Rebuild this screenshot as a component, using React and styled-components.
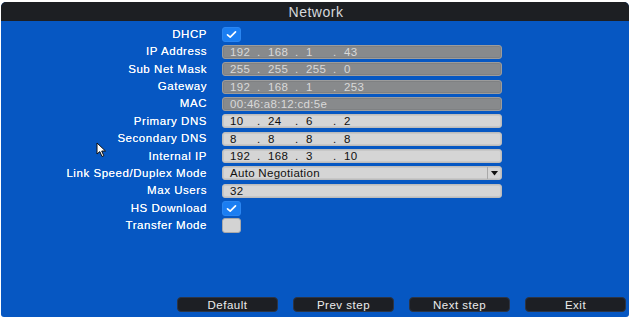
import React from "react";
import styled, { createGlobalStyle } from "styled-components";

const GlobalStyle = createGlobalStyle`
  html, body { margin: 0; padding: 0; background: #ffffff; }
  body { font-family: "Liberation Sans", Arial, sans-serif; }
`;

const Window = styled.div`
  position: relative;
  margin: 2px 2px 0 1px;
  height: 315px;
  display: flex;
  flex-direction: column;
  border-radius: 5px 5px 3px 3px;
  overflow: hidden;
  background: #0657c2;
`;

const TitleBar = styled.div`
  height: 19px;
  background: #1d1f23;
  color: #d6d8dc;
  font-size: 14px;
  letter-spacing: 0.5px;
  display: flex;
  align-items: center;
  justify-content: center;
  padding-left: 2px;
`;

const Body = styled.div`
  flex: 1;
  display: flex;
  flex-direction: column;
  padding: 6px 3px 5px 0;
`;

const Form = styled.div`
  display: grid;
  grid-template-columns: 206px 280px;
  column-gap: 15px;
  grid-auto-rows: 15px;
  row-gap: 2.36px;
`;

const Label = styled.div`
  color: #ffffff;
  font-size: 11.5px;
  letter-spacing: 0.55px;
  text-align: right;
  align-self: center;
  line-height: 15px;
  white-space: nowrap;
  text-shadow: 0 0 0.6px rgba(255, 255, 255, 0.8);
`;

const Field = styled.div`
  height: 14px;
  box-sizing: border-box;
  align-self: center;
  border-radius: 3px;
  display: flex;
  align-items: center;
  padding-left: 7px;
  font-size: 11.5px;
  letter-spacing: 0.3px;
  white-space: nowrap;
  background: ${(p) => (p.$disabled ? "#888a8c" : "#d5d5d5")};
  color: ${(p) => (p.$disabled ? "#d9d9d9" : "#101010")};
  border: 1px solid ${(p) => (p.$disabled ? "#9c9c9c" : "#bcbcbc")};
  box-shadow: inset 0 0 0 1px ${(p) => (p.$disabled ? "#7f8183" : "#c7c7c7")};
`;

const Segment = styled.span`
  width: 38px;
  display: inline-flex;
  flex: none;
`;

const Num = styled.span`
  width: 27px;
  flex: none;
`;

const SelectField = styled(Field)`
  padding-right: 0;
  justify-content: space-between;
`;

const SelectArrow = styled.span`
  width: 13px;
  height: 100%;
  border-left: 1px solid #a9a9a9;
  display: flex;
  align-items: center;
  justify-content: center;
`;

const Check = styled.div`
  width: 19px;
  height: 15px;
  box-sizing: border-box;
  align-self: center;
  border-radius: 3px;
  display: flex;
  align-items: center;
  justify-content: center;
  background: ${(p) => (p.$checked ? "#1b7ef2" : "#d3d3d3")};
  border: 1px solid ${(p) => (p.$checked ? "#2a86f2" : "#a9a9a9")};
`;

const ButtonBar = styled.div`
  margin-top: auto;
  display: flex;
  justify-content: flex-end;
  gap: 15px;
`;

const Button = styled.div`
  width: 101px;
  height: 15px;
  box-sizing: border-box;
  border-radius: 4px;
  background: #1d1f24;
  border: 1px solid #2c3444;
  color: #ececec;
  font-size: 11.5px;
  letter-spacing: 0.5px;
  display: flex;
  align-items: center;
  justify-content: center;
`;

const Cursor = styled.svg`
  position: absolute;
  left: 95px;
  top: 140px;
`;

const IpValue = ({ parts }) => (
  <>
    {parts.map((p, i) => (
      <Segment key={i}>
        <Num>{p}</Num>
        {i < parts.length - 1 ? "." : null}
      </Segment>
    ))}
  </>
);

const CheckMark = () => (
  <svg width="11" height="9" viewBox="0 0 11 9">
    <path d="M1.5 4.8 L4.2 7.2 L9.5 1.8" fill="none" stroke="#ffffff" strokeWidth="1.7" strokeLinecap="round" strokeLinejoin="round" />
  </svg>
);

export default function App() {
  return (
    <>
      <GlobalStyle />
      <Window>
        <TitleBar>Network</TitleBar>
        <Body>
          <Form>
            <Label>DHCP</Label>
            <Check $checked><CheckMark /></Check>

            <Label>IP Address</Label>
            <Field $disabled><IpValue parts={["192", "168", "1", "43"]} /></Field>

            <Label>Sub Net Mask</Label>
            <Field $disabled><IpValue parts={["255", "255", "255", "0"]} /></Field>

            <Label>Gateway</Label>
            <Field $disabled><IpValue parts={["192", "168", "1", "253"]} /></Field>

            <Label>MAC</Label>
            <Field $disabled>00:46:a8:12:cd:5e</Field>

            <Label>Primary DNS</Label>
            <Field><IpValue parts={["10", "24", "6", "2"]} /></Field>

            <Label>Secondary DNS</Label>
            <Field><IpValue parts={["8", "8", "8", "8"]} /></Field>

            <Label>Internal IP</Label>
            <Field><IpValue parts={["192", "168", "3", "10"]} /></Field>

            <Label>Link Speed/Duplex Mode</Label>
            <SelectField>
              <span>Auto Negotiation</span>
              <SelectArrow>
                <svg width="7" height="5" viewBox="0 0 7 5">
                  <path d="M0 0 H7 L3.5 4.5 Z" fill="#111" />
                </svg>
              </SelectArrow>
            </SelectField>

            <Label>Max Users</Label>
            <Field>32</Field>

            <Label>HS Download</Label>
            <Check $checked><CheckMark /></Check>

            <Label>Transfer Mode</Label>
            <Check />
          </Form>
          <ButtonBar>
            <Button>Default</Button>
            <Button>Prev step</Button>
            <Button>Next step</Button>
            <Button>Exit</Button>
          </ButtonBar>
        </Body>
        <Cursor width="12" height="16" viewBox="0 0 12 16">
          <path d="M1 1 L1 12 L3.8 9.6 L6 14.5 L7.8 13.7 L5.7 9 L9.5 9 Z" fill="#ffffff" stroke="#111" strokeWidth="1" strokeLinejoin="round" />
        </Cursor>
      </Window>
    </>
  );
}
